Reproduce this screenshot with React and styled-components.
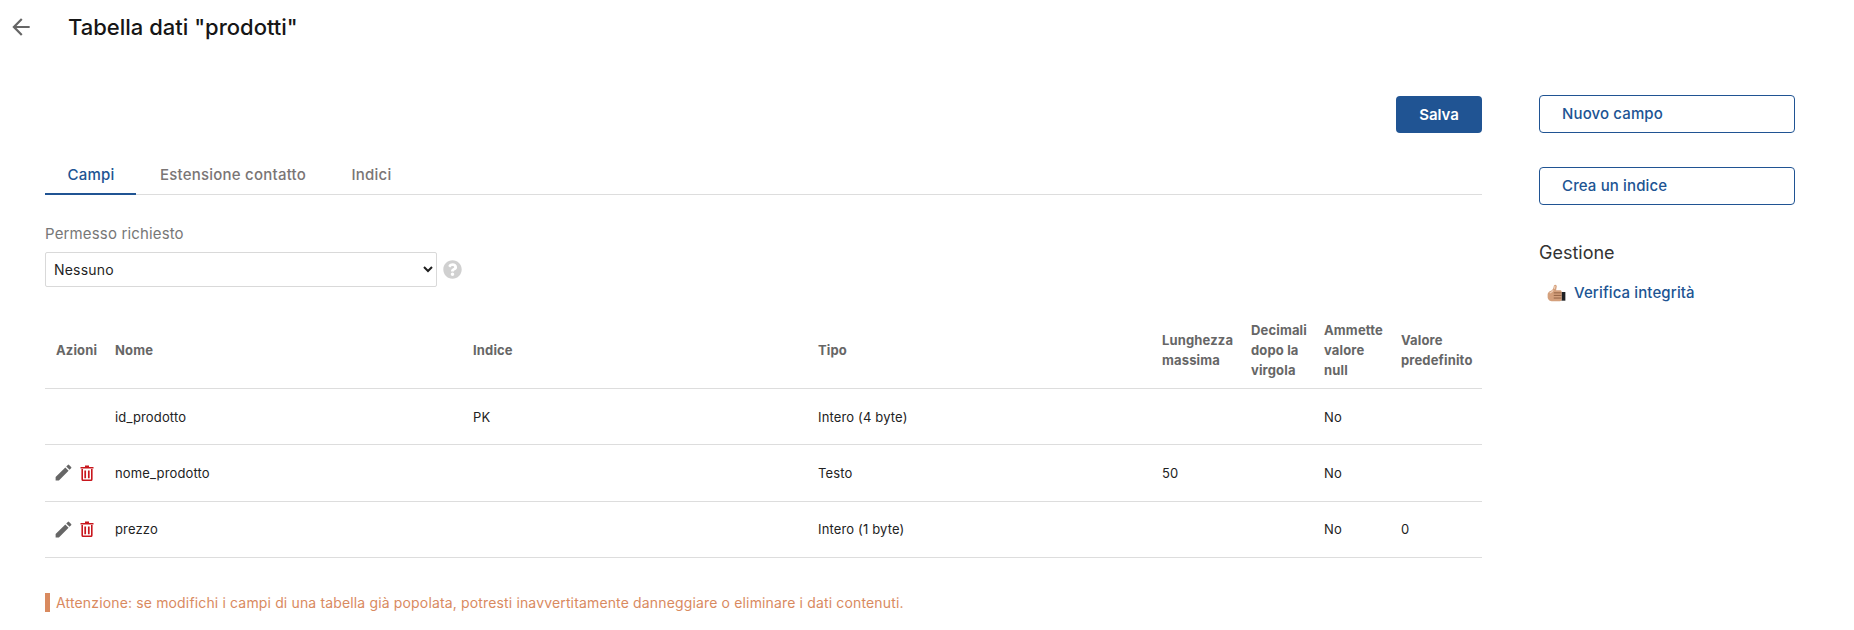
import React from "react";
import styled, { createGlobalStyle } from "styled-components";
import { MdArrowBack, MdEdit } from "react-icons/md";
import { FaQuestionCircle } from "react-icons/fa";

const Global = createGlobalStyle`
  html, body { margin: 0; padding: 0; background: #fff; }
  body { font-family: Inter, "Liberation Sans", sans-serif; color: #1f1f1f; }
`;

const Page = styled.div`
  width: 1854px;
  height: 630px;
  overflow: hidden;
`;
const Header = styled.header`
  display: flex;
  align-items: center;
  height: 54px;
  padding-left: 8px;
`;
const BackLink = styled.a`
  display: flex;
  width: 60px;
  color: #666;
  font-size: 26px;
`;
const Title = styled.h1`
  margin: 0;
  font-size: 22px;
  line-height: 28px;
  font-weight: 450;
  color: #161616;
`;
const Body = styled.div`
  display: flex;
  gap: 57px;
  padding: 41px 0 0 45px;
`;
const Main = styled.main`
  width: 1437px;
  flex: none;
`;
const Toolbar = styled.div`
  display: flex;
  justify-content: flex-end;
  height: 37px;
  margin-top: 1px;
`;
const SaveButton = styled.button`
  width: 86px;
  height: 37px;
  border: 0;
  border-radius: 4px;
  background: #205493;
  color: #fff;
  font: 600 15px Inter, sans-serif;
`;
const Tabs = styled.nav`
  display: flex;
  gap: 1.5px;
  margin-top: 22px;
  border-bottom: 1px solid #ddd;
  height: 39px;
`;
const Tab = styled.a`
  padding: 0 21.5px 0 22.5px;
  box-sizing: content-box;
  height: 38px;
  line-height: 40px;
  font-size: 15px;
  font-weight: 500;
  letter-spacing: 0.22px;
  color: ${(p) => (p.$active ? "#205493" : "#7a7575")};
  border-bottom: 2px solid ${(p) => (p.$active ? "#205493" : "transparent")};
  margin-bottom: -1px;
`;
const FieldLabel = styled.label`
  display: block;
  margin-top: 29px;
  font-size: 15px;
  line-height: 20px;
  letter-spacing: 0.15px;
  color: #777;
`;
const FieldRow = styled.div`
  display: flex;
  align-items: center;
  gap: 6px;
  margin-top: 8px;
`;
const Select = styled.select`
  width: 392px;
  height: 35px;
  padding: 0 4px;
  border: 1px solid #d9d9d9;
  border-radius: 2px;
  background: #fff;
  font: 400 14px Inter, sans-serif;
  letter-spacing: 0.2px;
  color: #1f1f1f;
`;
const HelpIcon = styled.span`
  display: flex;
  color: #d0d0d0;
  font-size: 19px;
`;
const Table = styled.table`
  width: 1437px;
  margin-top: 22px;
  table-layout: fixed;
  border-collapse: collapse;
  font-size: 13px;
  letter-spacing: 0.15px;
`;
const Th = styled.th`
  height: 77px;
  padding: 2px 4px 0 ${(p) => (p.$first ? 11 : 10)}px;
  text-align: left;
  font-weight: 700;
  line-height: 20px;
  color: #666;
  border-bottom: 1px solid #ddd;
`;
const Td = styled.td`
  height: 55.34px;
  padding: 0 0 0 10px;
  line-height: 20px;
  color: #222;
  border-bottom: 1px solid #ddd;
`;
const Actions = styled.div`
  display: flex;
  align-items: center;
  gap: 6px;
  margin-left: -2px;
  color: #666;
  font-size: 21px;
`;
const TrashIcon = styled.svg`
  width: 14px;
  height: 16px;
  display: block;
`;
const Warning = styled.p`
  margin: 35px 0 0;
  padding-left: 6px;
  border-left: 5px solid #d98a5f;
  height: 19px;
  line-height: 19px;
  font-size: 14px;
  letter-spacing: 0.15px;
  color: #d98a5f;
`;
const Sidebar = styled.aside`
  width: 256px;
  flex: none;
`;
const OutlineButton = styled.button`
  display: block;
  width: 256px;
  height: 38px;
  margin-bottom: 34px;
  padding: 0 0 2px 22px;
  border: 1px solid #205493;
  border-radius: 4px;
  background: #fff;
  color: #205493;
  text-align: left;
  font: 500 15px Inter, sans-serif;
  letter-spacing: 0.13px;
`;
const SectionTitle = styled.h2`
  margin: 36px 0 0;
  font-size: 18px;
  line-height: 24px;
  font-weight: 400;
  color: #333;
`;
const ToolLink = styled.a`
  display: flex;
  align-items: center;
  gap: 8px;
  margin-top: 16px;
  padding-left: 8px;
  font-size: 15px;
  font-weight: 500;
  line-height: 24px;
  letter-spacing: 0.12px;
  color: #205493;
`;
const ThumbIcon = styled.svg`
  width: 19px;
  height: 19px;
  display: block;
`;

const Trash = () => (
  <TrashIcon viewBox="0 0 14 16">
    <path d="M5 .5h4v1.5h4.5v1.6H.5V2H5z" fill="#c8161d" />
    <path d="M2.2 4v10.2c0 .7.5 1.1 1.1 1.1h7.4c.6 0 1.1-.4 1.1-1.1V4" fill="none" stroke="#c8161d" strokeWidth="1.6" />
    <path d="M5.2 5.6v7.6M8.8 5.6v7.6" stroke="#c8161d" strokeWidth="1.7" />
  </TrashIcon>
);

const Thumb = () => (
  <ThumbIcon viewBox="0 0 18 18">
    <path d="M13.6 7.6h3.8v8.2h-3.8z" fill="#1e2023" />
    <path d="M7.8 .6c1.1 0 1.7.9 1.4 2.1L8.6 6h3.7c1 0 1.6.6 1.6 1.5v7.2c0 1-.7 1.6-1.7 1.6H5.3C2.8 16.3.6 14.8.6 12.2V9.9C.6 8 2 7 3.8 6.3c1.6-.7 2.3-2 2.6-4.1.1-.9.5-1.6 1.4-1.6z" fill="#d4a07c" />
    <path d="M6.4 8.4h7.4M6.4 10.8h7.4M6.4 13.3h7.2" stroke="#8f5f41" strokeWidth=".9" fill="none" />
    <path d="M2.6 8.6c1.2-.8 2.6-1.2 3.3-2.6M7.6 1.8 7 4.6" stroke="#f0d0b8" strokeWidth="1.1" fill="none" />
  </ThumbIcon>
);

const widths = [60, 358, 345, 344, 89, 73, 77, 91];
const headers = ["Azioni", "Nome", "Indice", "Tipo", "Lunghezza massima", "Decimali dopo la virgola", "Ammette valore null", "Valore predefinito"];
const rows = [
  { editable: false, cells: ["id_prodotto", "PK", "Intero (4 byte)", "", "", "No", ""] },
  { editable: true, cells: ["nome_prodotto", "", "Testo", "50", "", "No", ""] },
  { editable: true, cells: ["prezzo", "", "Intero (1 byte)", "", "", "No", "0"] },
];

export default function App() {
  return (
    <Page>
      <Global />
      <Header>
        <BackLink><MdArrowBack /></BackLink>
        <Title>Tabella dati "prodotti"</Title>
      </Header>
      <Body>
        <Main>
          <Toolbar><SaveButton>Salva</SaveButton></Toolbar>
          <Tabs>
            <Tab $active>Campi</Tab>
            <Tab>Estensione contatto</Tab>
            <Tab>Indici</Tab>
          </Tabs>
          <FieldLabel>Permesso richiesto</FieldLabel>
          <FieldRow>
            <Select defaultValue="Nessuno"><option>Nessuno</option></Select>
            <HelpIcon><FaQuestionCircle /></HelpIcon>
          </FieldRow>
          <Table>
            <colgroup>
              {widths.map((w, i) => <col key={i} width={w} />)}
            </colgroup>
            <thead>
              <tr>{headers.map((h, i) => <Th key={h} $first={i === 0}>{h}</Th>)}</tr>
            </thead>
            <tbody>
              {rows.map((r) => (
                <tr key={r.cells[0]}>
                  <Td>
                    {r.editable && (
                      <Actions><MdEdit /><Trash /></Actions>
                    )}
                  </Td>
                  {r.cells.map((c, i) => <Td key={i}>{c}</Td>)}
                </tr>
              ))}
            </tbody>
          </Table>
          <Warning>Attenzione: se modifichi i campi di una tabella già popolata, potresti inavvertitamente danneggiare o eliminare i dati contenuti.</Warning>
        </Main>
        <Sidebar>
          <OutlineButton>Nuovo campo</OutlineButton>
          <OutlineButton>Crea un indice</OutlineButton>
          <SectionTitle>Gestione</SectionTitle>
          <ToolLink><Thumb />Verifica integrità</ToolLink>
        </Sidebar>
      </Body>
    </Page>
  );
}
